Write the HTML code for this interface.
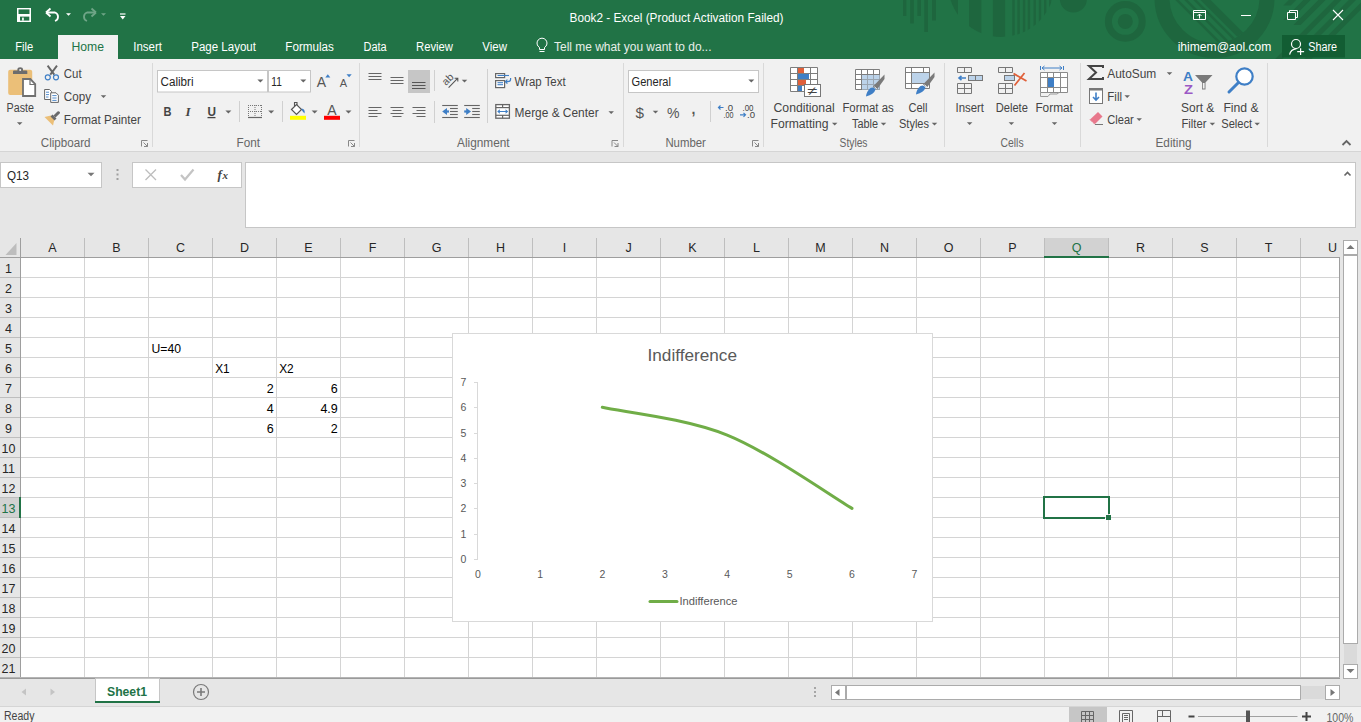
<!DOCTYPE html><html><head><meta charset="utf-8"><style>html,body{margin:0;padding:0;background:#fff;overflow:hidden}svg{display:block}text{font-family:"Liberation Sans",sans-serif}</style></head><body>
<svg width="1361" height="722" viewBox="0 0 1361 722" shape-rendering="auto">
<rect x="0" y="0" width="1361" height="59" fill="#217346" />
<rect x="903" y="0" width="3.4" height="16" fill="#1e663e" />
<rect x="910.2" y="0" width="3.6" height="23.5" fill="#1e663e" />
<rect x="917.4" y="0" width="3.6" height="16" fill="#1e663e" />
<rect x="924.3" y="0" width="3.7" height="32" fill="#1e663e" />
<rect x="932" y="0" width="4" height="20.5" fill="#1e663e" />
<clipPath id="sc"><circle cx="1001.3" cy="-16.2" r="53.2"/></clipPath>
<g clip-path="url(#sc)" fill="#1e663e">
<rect x="940" y="0" width="18" height="40" fill="#1e663e" />
<rect x="969" y="0" width="12.4" height="60" fill="#1e663e" />
<rect x="992.9" y="0" width="12.2" height="60" fill="#1e663e" />
<rect x="1012.3" y="0" width="2.4" height="60" fill="#1e663e" />
<rect x="1017.4" y="0" width="2.4" height="60" fill="#1e663e" />
<rect x="1022.9" y="0" width="2.4" height="60" fill="#1e663e" />
<rect x="1027.7" y="0" width="2.4" height="60" fill="#1e663e" />
<rect x="1033.5" y="0" width="2.4" height="60" fill="#1e663e" />
<rect x="1038.8" y="0" width="2.4" height="60" fill="#1e663e" />
<rect x="1044" y="0" width="2.4" height="60" fill="#1e663e" />
<rect x="1049" y="0" width="2.4" height="60" fill="#1e663e" />
</g>
<circle cx="1073.4" cy="-1" r="13.5" fill="#1e663e"/>
<circle cx="1125.3" cy="21.4" r="16.9" fill="none" stroke="#1e663e" stroke-width="7"/>
<circle cx="1125.3" cy="21.4" r="7.5" fill="#1e663e"/>
<circle cx="1214.5" cy="-2" r="52.5" fill="none" stroke="#1e663e" stroke-width="15"/>
<clipPath id="bc"><circle cx="1214.5" cy="-2" r="45"/></clipPath>
<g clip-path="url(#bc)">
<path d="M1175.25,0 L1178.75,0 L1248.75,70 L1245.25,70 Z" fill="#1e663e" />
<path d="M1184.25,0 L1187.75,0 L1257.75,70 L1254.25,70 Z" fill="#1e663e" />
<path d="M1193.25,0 L1196.75,0 L1266.75,70 L1263.25,70 Z" fill="#1e663e" />
<path d="M1200.5,0 L1210.5,0 L1280.5,70 L1270.5,70 Z" fill="#1e663e" />
</g>
<path d="M1288.9,0 L1296.1,0 L1290.6,5.5 L1283.4,5.5 Z" fill="#1e663e" />
<path d="M1303.4,0 L1310.6,0 L1290.6,20 L1283.4,20 Z" fill="#1e663e" />
<path d="M1318.4,0 L1325.6,0 L1300.6,25 L1293.4,25 Z" fill="#1e663e" />
<path d="M1334.1000000000001,0 L1341.3,0 L1281.3,60 L1274.1000000000001,60 Z" fill="#1e663e" />
<path d="M1348.8000000000002,0 L1356.0,0 L1296.0,60 L1288.8000000000002,60 Z" fill="#1e663e" />
<path d="M1363.4,0 L1370.6,0 L1310.6,60 L1303.4,60 Z" fill="#1e663e" />
<path d="M1193.5,10.5 H1205.5 V19.5 H1193.5 Z M1193.5,12.5 H1205.5" fill="none" stroke="#ffffff" stroke-width="1" />
<path d="M1199.5,18.5 V14 M1197.5,16 L1199.5,14 L1201.5,16" fill="none" stroke="#ffffff" stroke-width="1" />
<line x1="1241" y1="15.5" x2="1251" y2="15.5" stroke="#ffffff" stroke-width="1" />
<path d="M1287.5,12.5 H1295.5 V19.5 H1287.5 Z M1289.5,12.5 V10.5 H1297.5 V17.5 H1295.5" fill="none" stroke="#ffffff" stroke-width="1" />
<path d="M1333,10 L1343,20 M1343,10 L1333,20" fill="none" stroke="#ffffff" stroke-width="1.1" />
<rect x="17" y="8" width="14" height="14" fill="#ffffff" />
<rect x="18.5" y="9.4" width="11" height="4.6" fill="#217346" />
<rect x="20" y="16.6" width="9.3" height="4" fill="#217346" />
<rect x="22.1" y="17.6" width="1.7" height="3" fill="#ffffff" />
<path d="M47,12.5 H55 A4.5,4.5 0 0 1 55,21" fill="none" stroke="#ffffff" stroke-width="1.8" />
<path d="M46,12.5 L50.5,8.5 M46,12.5 L50.5,16.5" fill="none" stroke="#ffffff" stroke-width="1.8" />
<path d="M66.0,13.25 L71.0,13.25 L68.5,15.75 Z" fill="#ffffff" />
<path d="M95,12.5 H87 A4.5,4.5 0 0 0 87,21" fill="none" stroke="#6fa587" stroke-width="1.8" />
<path d="M96,12.5 L91.5,8.5 M96,12.5 L91.5,16.5" fill="none" stroke="#6fa587" stroke-width="1.8" />
<path d="M101.0,13.25 L106.0,13.25 L103.5,15.75 Z" fill="#6fa587" />
<line x1="120" y1="14" x2="125.5" y2="14" stroke="#ffffff" stroke-width="1.2" />
<path d="M120,16 L125.5,16 L122.75,19.5 Z" fill="#ffffff" />
<text x="569.5" y="22" font-size="12.5" fill="#fff" textLength="214" lengthAdjust="spacingAndGlyphs" >Book2 - Excel (Product Activation Failed)</text>
<rect x="58" y="35" width="60" height="24" fill="#f1f1f1" />
<text x="15.3" y="50.5" font-size="12.5" fill="#fff" textLength="18" lengthAdjust="spacingAndGlyphs" >File</text>
<text x="71.5" y="50.5" font-size="12.5" fill="#217346" textLength="32.5" lengthAdjust="spacingAndGlyphs" >Home</text>
<text x="133.2" y="50.5" font-size="12.5" fill="#fff" textLength="28.7" lengthAdjust="spacingAndGlyphs" >Insert</text>
<text x="191.2" y="50.5" font-size="12.5" fill="#fff" textLength="64.8" lengthAdjust="spacingAndGlyphs" >Page Layout</text>
<text x="285.3" y="50.5" font-size="12.5" fill="#fff" textLength="48.5" lengthAdjust="spacingAndGlyphs" >Formulas</text>
<text x="363.5" y="50.5" font-size="12.5" fill="#fff" textLength="23.2" lengthAdjust="spacingAndGlyphs" >Data</text>
<text x="416" y="50.5" font-size="12.5" fill="#fff" textLength="37" lengthAdjust="spacingAndGlyphs" >Review</text>
<text x="482.3" y="50.5" font-size="12.5" fill="#fff" textLength="24.7" lengthAdjust="spacingAndGlyphs" >View</text>
<path d="M539.5,49.5 V47.5 A5,5 0 1 1 544.5,47.5 V49.5 Z" fill="none" stroke="#fff" stroke-width="1" />
<line x1="539.5" y1="51.5" x2="544.5" y2="51.5" stroke="#fff" stroke-width="1" />
<text x="554" y="51.3" font-size="12.5" fill="#e8efe9" textLength="157.5" lengthAdjust="spacingAndGlyphs" >Tell me what you want to do...</text>
<text x="1177.7" y="50.5" font-size="12.5" fill="#fff" textLength="93.6" lengthAdjust="spacingAndGlyphs" >ihimem@aol.com</text>
<rect x="1282" y="35" width="63" height="22.5" fill="#125d33" />
<circle cx="1296" cy="44" r="4.5" fill="none" stroke="#fff" stroke-width="1.2"/>
<path d="M1289.6,54.6 Q1290.5,49.5 1296.5,48.6" fill="none" stroke="#fff" stroke-width="1.2" />
<path d="M1297.2,51.6 H1304.1 M1300.6,48.3 V55" fill="none" stroke="#fff" stroke-width="1.2" />
<text x="1308.2" y="50.5" font-size="12.5" fill="#fff" textLength="28.8" lengthAdjust="spacingAndGlyphs" >Share</text>
<rect x="0" y="59" width="1361" height="92" fill="#f1f1f1" />
<line x1="0" y1="151.5" x2="1361" y2="151.5" stroke="#d5d5d5" stroke-width="1" />
<line x1="152.5" y1="63" x2="152.5" y2="147" stroke="#d9d9d9" stroke-width="1" />
<line x1="359.5" y1="63" x2="359.5" y2="147" stroke="#d9d9d9" stroke-width="1" />
<line x1="623.5" y1="63" x2="623.5" y2="147" stroke="#d9d9d9" stroke-width="1" />
<line x1="763.5" y1="63" x2="763.5" y2="147" stroke="#d9d9d9" stroke-width="1" />
<line x1="944.5" y1="63" x2="944.5" y2="147" stroke="#d9d9d9" stroke-width="1" />
<line x1="1080.5" y1="63" x2="1080.5" y2="147" stroke="#d9d9d9" stroke-width="1" />
<line x1="1267.5" y1="63" x2="1267.5" y2="147" stroke="#d9d9d9" stroke-width="1" />
<text x="40.8" y="146.5" font-size="12.5" fill="#666666" textLength="49.7" lengthAdjust="spacingAndGlyphs" >Clipboard</text>
<text x="236.5" y="146.5" font-size="12.5" fill="#666666" textLength="23.5" lengthAdjust="spacingAndGlyphs" >Font</text>
<text x="457" y="146.5" font-size="12.5" fill="#666666" textLength="52.6" lengthAdjust="spacingAndGlyphs" >Alignment</text>
<text x="665.4" y="146.5" font-size="12.5" fill="#666666" textLength="40.5" lengthAdjust="spacingAndGlyphs" >Number</text>
<text x="839.6" y="146.5" font-size="12.5" fill="#666666" textLength="27.9" lengthAdjust="spacingAndGlyphs" >Styles</text>
<text x="1000.5" y="146.5" font-size="12.5" fill="#666666" textLength="23.1" lengthAdjust="spacingAndGlyphs" >Cells</text>
<text x="1155.5" y="146.5" font-size="12.5" fill="#666666" textLength="36" lengthAdjust="spacingAndGlyphs" >Editing</text>
<path d="M141.5,140.5 H147.5 M141.5,140.5 V146.5" fill="none" stroke="#888" stroke-width="1" />
<path d="M143.5,142.5 L147.5,146.5 M147.5,143 V146.5 H144" fill="none" stroke="#888" stroke-width="1" />
<path d="M348.5,140.5 H354.5 M348.5,140.5 V146.5" fill="none" stroke="#888" stroke-width="1" />
<path d="M350.5,142.5 L354.5,146.5 M354.5,143 V146.5 H351" fill="none" stroke="#888" stroke-width="1" />
<path d="M612.0,140.5 H618.0 M612.0,140.5 V146.5" fill="none" stroke="#888" stroke-width="1" />
<path d="M614.0,142.5 L618.0,146.5 M618.0,143 V146.5 H614.5" fill="none" stroke="#888" stroke-width="1" />
<path d="M752.5,140.5 H758.5 M752.5,140.5 V146.5" fill="none" stroke="#888" stroke-width="1" />
<path d="M754.5,142.5 L758.5,146.5 M758.5,143 V146.5 H755" fill="none" stroke="#888" stroke-width="1" />
<path d="M1342.5,145 L1346.5,141 L1350.5,145" fill="none" stroke="#666" stroke-width="1.8" />
<rect x="8.2" y="69.7" width="24" height="25.3" fill="#ebbf78" rx="2"/>
<path d="M13,74 H27.3 V71.5 Q27.3,70.6 26.3,70.6 H23 V69 Q23,67.2 20.2,67.2 Q17.4,67.2 17.4,69 V70.6 H14 Q13,70.6 13,71.5 Z" fill="#6d6d6d" />
<circle cx="20.2" cy="70" r="1" fill="#f1f1f1"/>
<path d="M23,79 H30.3 L35.2,84 V96 H23 Z" fill="#ffffff" stroke="#707070" stroke-width="1.8" stroke-linejoin="miter"/>
<path d="M30,79 V84.5 H35.5" fill="none" stroke="#707070" stroke-width="1.2" />
<text x="6.6" y="112.3" font-size="12.5" fill="#444444" textLength="27.4" lengthAdjust="spacingAndGlyphs" >Paste</text>
<path d="M16.95,122.125 L22.45,122.125 L19.7,124.875 Z" fill="#666" />
<path d="M47.6,65.6 L54.3,74.6 M57,65.6 L50.3,74.6" fill="none" stroke="#666" stroke-width="1.9" />
<circle cx="47.8" cy="77.3" r="2.5" fill="none" stroke="#3f7fc6" stroke-width="1.2"/>
<circle cx="56" cy="77.3" r="2.5" fill="none" stroke="#3f7fc6" stroke-width="1.2"/>
<text x="63.8" y="77.8" font-size="12.5" fill="#444444" textLength="17.8" lengthAdjust="spacingAndGlyphs" >Cut</text>
<path d="M44.6,89.5 H49.5 L51.5,91.5 V99.5 H44.6 Z" fill="#fff" stroke="#666" stroke-width="1" />
<path d="M50.7,92.8 H56 L58.4,95.2 V102.4 H50.7 Z" fill="#fff" stroke="#666" stroke-width="1" />
<path d="M46,92.2 H49 M46,94.6 H49 M46,97 H48.5" fill="none" stroke="#3f7fc6" stroke-width="0.9" />
<path d="M52.3,95.6 H56.6 M52.3,98 H56.6 M52.3,100.4 H56.6" fill="none" stroke="#3f7fc6" stroke-width="0.9" />
<text x="63.8" y="100.8" font-size="12.5" fill="#444444" textLength="27.2" lengthAdjust="spacingAndGlyphs" >Copy</text>
<path d="M100.75,95.125 L106.25,95.125 L103.5,97.875 Z" fill="#666" />
<path d="M44.5,117 L51,115.5 L54.5,119 L53,125.5 Z" fill="#ebbf78" />
<path d="M50.3,118 L57,111.5 M53.5,121 L60,114.5" fill="none" stroke="#6a6a6a" stroke-width="0" />
<path d="M50.5,116.5 L52.5,114.5 L56.5,118.5 L54.5,120.5 Z" fill="#6a6a6a" />
<path d="M53.5,115.5 L57.5,111.5 Q58.5,110.8 59.2,111.5 L59.7,112 Q60.4,112.7 59.7,113.5 L55.5,117.5 Z" fill="#6a6a6a" />
<text x="63.8" y="123.8" font-size="12.5" fill="#444444" textLength="77" lengthAdjust="spacingAndGlyphs" >Format Painter</text>
<rect x="157.5" y="70.5" width="110" height="21.5" fill="#fff" stroke="#c6c6c6" stroke-width="1"/>
<rect x="268.5" y="70.5" width="42" height="21.5" fill="#fff" stroke="#c6c6c6" stroke-width="1"/>
<text x="160.5" y="85.8" font-size="12.5" fill="#262626" textLength="33" lengthAdjust="spacingAndGlyphs" >Calibri</text>
<text x="271.3" y="85.8" font-size="12.5" fill="#262626" textLength="10.5" lengthAdjust="spacingAndGlyphs" >11</text>
<path d="M257.4,79.5 L263.4,79.5 L260.4,82.5 Z" fill="#666" />
<path d="M300.3,79.5 L306.3,79.5 L303.3,82.5 Z" fill="#666" />
<text x="321.5" y="86.7" font-size="14" fill="#555" text-anchor="middle" >A</text>
<path d="M325.3,77.5 L327.8,74.3 L330.3,77.5 Z" fill="#3f7fc6" />
<text x="343.5" y="86.7" font-size="11" fill="#555" text-anchor="middle" >A</text>
<path d="M346.5,74.3 L351.7,74.3 L349.1,77.3 Z" fill="#3f7fc6" />
<text x="163.5" y="115.8" font-size="13" fill="#444" textLength="8" lengthAdjust="spacingAndGlyphs" font-weight="bold" >B</text>
<text x="185.5" y="115.8" font-size="13" fill="#444" font-weight="bold" font-style="italic" style="font-family:Liberation Serif">I</text>
<text x="207.5" y="115.8" font-size="13" fill="#444" textLength="8.5" lengthAdjust="spacingAndGlyphs" font-weight="bold" >U</text>
<line x1="207.5" y1="117.6" x2="215.5" y2="117.6" stroke="#444" stroke-width="1.3" />
<path d="M225.4,110.5 L231.4,110.5 L228.4,113.5 Z" fill="#666" />
<line x1="239.5" y1="101" x2="239.5" y2="122" stroke="#d0d0d0" stroke-width="1" />
<g fill="#888">
<rect x="248" y="105" width="1" height="1" fill="#777" />
<rect x="248" y="111" width="1" height="1" fill="#777" />
<rect x="250" y="105" width="1" height="1" fill="#777" />
<rect x="250" y="111" width="1" height="1" fill="#777" />
<rect x="252" y="105" width="1" height="1" fill="#777" />
<rect x="252" y="111" width="1" height="1" fill="#777" />
<rect x="254" y="105" width="1" height="1" fill="#777" />
<rect x="254" y="111" width="1" height="1" fill="#777" />
<rect x="256" y="105" width="1" height="1" fill="#777" />
<rect x="256" y="111" width="1" height="1" fill="#777" />
<rect x="258" y="105" width="1" height="1" fill="#777" />
<rect x="258" y="111" width="1" height="1" fill="#777" />
<rect x="260" y="105" width="1" height="1" fill="#777" />
<rect x="260" y="111" width="1" height="1" fill="#777" />
<rect x="248" y="105" width="1" height="1" fill="#777" />
<rect x="254.5" y="105" width="1" height="1" fill="#777" />
<rect x="261" y="105" width="1" height="1" fill="#777" />
<rect x="248" y="107" width="1" height="1" fill="#777" />
<rect x="254.5" y="107" width="1" height="1" fill="#777" />
<rect x="261" y="107" width="1" height="1" fill="#777" />
<rect x="248" y="109" width="1" height="1" fill="#777" />
<rect x="254.5" y="109" width="1" height="1" fill="#777" />
<rect x="261" y="109" width="1" height="1" fill="#777" />
<rect x="248" y="111" width="1" height="1" fill="#777" />
<rect x="254.5" y="111" width="1" height="1" fill="#777" />
<rect x="261" y="111" width="1" height="1" fill="#777" />
<rect x="248" y="113" width="1" height="1" fill="#777" />
<rect x="254.5" y="113" width="1" height="1" fill="#777" />
<rect x="261" y="113" width="1" height="1" fill="#777" />
<rect x="248" y="115" width="1" height="1" fill="#777" />
<rect x="254.5" y="115" width="1" height="1" fill="#777" />
<rect x="261" y="115" width="1" height="1" fill="#777" />
</g>
<line x1="248" y1="117.5" x2="262" y2="117.5" stroke="#666" stroke-width="1.2" />
<path d="M268.2,110.5 L274.2,110.5 L271.2,113.5 Z" fill="#666" />
<line x1="282.5" y1="101" x2="282.5" y2="122" stroke="#d0d0d0" stroke-width="1" />
<path d="M291.5,109.5 L296.5,104.5 L301.5,109.5 L296.5,114.5 Z" fill="#fff" stroke="#555" stroke-width="1.2" />
<path d="M294.5,106 V102.5 H297 V105" fill="none" stroke="#555" stroke-width="1.1" />
<path d="M301.5,108.5 Q305.5,109 304.5,113.5 Q303,112 302,110.5 Z" fill="#3f7fc6" />
<rect x="290" y="115.8" width="16" height="4" fill="#ffff00" />
<path d="M311.6,110.5 L317.6,110.5 L314.6,113.5 Z" fill="#666" />
<text x="332" y="114.8" font-size="14" fill="#555" text-anchor="middle" >A</text>
<rect x="324" y="115.8" width="16" height="4" fill="#ff0000" />
<path d="M345.5,110.5 L351.5,110.5 L348.5,113.5 Z" fill="#666" />
<line x1="368.5" y1="73.5" x2="381.5" y2="73.5" stroke="#666" stroke-width="1" />
<line x1="368.5" y1="76.5" x2="381.5" y2="76.5" stroke="#666" stroke-width="1" />
<line x1="368.5" y1="79.5" x2="381.5" y2="79.5" stroke="#666" stroke-width="1" />
<line x1="390.5" y1="77.5" x2="403.5" y2="77.5" stroke="#666" stroke-width="1" />
<line x1="390.5" y1="80.5" x2="403.5" y2="80.5" stroke="#666" stroke-width="1" />
<line x1="390.5" y1="83.5" x2="403.5" y2="83.5" stroke="#666" stroke-width="1" />
<rect x="408" y="70" width="22" height="23" fill="#c6c6c6" />
<line x1="412" y1="82.5" x2="425.5" y2="82.5" stroke="#555" stroke-width="1" />
<line x1="412" y1="85.5" x2="425.5" y2="85.5" stroke="#555" stroke-width="1" />
<line x1="412" y1="88.5" x2="425.5" y2="88.5" stroke="#555" stroke-width="1" />
<line x1="434.5" y1="70" x2="434.5" y2="91" stroke="#d0d0d0" stroke-width="1" />
<g transform="translate(447.6,79.3) rotate(-45)"><text x="0" y="3.6" font-size="10.5" fill="#555" text-anchor="middle">ab</text></g>
<path d="M448.6,87.6 L457.8,78.2 M454.6,78.2 H457.8 V81.4" fill="none" stroke="#555" stroke-width="1.1" />
<path d="M461.75,79.625 L467.25,79.625 L464.5,82.375 Z" fill="#666" />
<line x1="487.5" y1="69" x2="487.5" y2="123" stroke="#d0d0d0" stroke-width="1" />
<rect x="495.6" y="73.6" width="9" height="4" fill="#fff" stroke="#666" stroke-width="1.2"/>
<line x1="497.5" y1="75.5" x2="509" y2="75.5" stroke="#3f7fc6" stroke-width="1.1" />
<rect x="495.6" y="80.6" width="9" height="7" fill="#fff" stroke="#666" stroke-width="1.2"/>
<line x1="497.5" y1="82.7" x2="503" y2="82.7" stroke="#3f7fc6" stroke-width="1.1" />
<line x1="497.5" y1="84.7" x2="503" y2="84.7" stroke="#3f7fc6" stroke-width="1.1" />
<path d="M510.6,78 V79.3 Q510.6,81.7 507.8,81.7 H505.6 M507.4,79.7 L505.4,81.7 L507.4,83.7" fill="none" stroke="#3f7fc6" stroke-width="1.2" />
<text x="514.6" y="86.3" font-size="12.5" fill="#444444" textLength="51" lengthAdjust="spacingAndGlyphs" >Wrap Text</text>
<rect x="495.8" y="104.6" width="13.6" height="13.6" fill="#fff" stroke="#666" stroke-width="1.3"/>
<line x1="495.8" y1="107.6" x2="509.4" y2="107.6" stroke="#666" stroke-width="1.2" />
<line x1="495.8" y1="115.3" x2="509.4" y2="115.3" stroke="#666" stroke-width="1.2" />
<line x1="502.6" y1="104.6" x2="502.6" y2="107.6" stroke="#666" stroke-width="1.2" />
<line x1="502.6" y1="115.3" x2="502.6" y2="118.2" stroke="#666" stroke-width="1.2" />
<path d="M498.2,111.5 H507.2" fill="none" stroke="#3f7fc6" stroke-width="1" />
<path d="M497.2,111.5 L499.8,109.3 V113.7 Z M508.2,111.5 L505.6,109.3 V113.7 Z" fill="#3f7fc6" />
<text x="514.6" y="116.6" font-size="12.5" fill="#444444" textLength="84" lengthAdjust="spacingAndGlyphs" >Merge &amp; Center</text>
<path d="M608.45,111.125 L613.95,111.125 L611.2,113.875 Z" fill="#666" />
<line x1="368.5" y1="107.5" x2="381.5" y2="107.5" stroke="#666" stroke-width="1" />
<line x1="390.5" y1="107.5" x2="403.5" y2="107.5" stroke="#666" stroke-width="1" />
<line x1="412.5" y1="107.5" x2="425.5" y2="107.5" stroke="#666" stroke-width="1" />
<line x1="368.5" y1="110.5" x2="377.5" y2="110.5" stroke="#666" stroke-width="1" />
<line x1="392.5" y1="110.5" x2="401.5" y2="110.5" stroke="#666" stroke-width="1" />
<line x1="416.5" y1="110.5" x2="425.5" y2="110.5" stroke="#666" stroke-width="1" />
<line x1="368.5" y1="113.5" x2="381.5" y2="113.5" stroke="#666" stroke-width="1" />
<line x1="390.5" y1="113.5" x2="403.5" y2="113.5" stroke="#666" stroke-width="1" />
<line x1="412.5" y1="113.5" x2="425.5" y2="113.5" stroke="#666" stroke-width="1" />
<line x1="368.5" y1="116.5" x2="377.5" y2="116.5" stroke="#666" stroke-width="1" />
<line x1="392.5" y1="116.5" x2="401.5" y2="116.5" stroke="#666" stroke-width="1" />
<line x1="416.5" y1="116.5" x2="425.5" y2="116.5" stroke="#666" stroke-width="1" />
<line x1="434.5" y1="101" x2="434.5" y2="123" stroke="#d0d0d0" stroke-width="1" />
<line x1="442.2" y1="105.5" x2="457.8" y2="105.5" stroke="#666" stroke-width="1.1" />
<line x1="442.2" y1="117.5" x2="457.8" y2="117.5" stroke="#666" stroke-width="1.1" />
<line x1="450" y1="108.5" x2="457.8" y2="108.5" stroke="#666" stroke-width="1.1" />
<line x1="450" y1="111.5" x2="457.8" y2="111.5" stroke="#666" stroke-width="1.1" />
<line x1="450" y1="114.5" x2="457.8" y2="114.5" stroke="#666" stroke-width="1.1" />
<path d="M442.2,111.5 L447,108 V115 Z" fill="#3f7fc6" />
<line x1="446" y1="111.5" x2="449" y2="111.5" stroke="#3f7fc6" stroke-width="2.2" />
<line x1="464.2" y1="105.5" x2="479.8" y2="105.5" stroke="#666" stroke-width="1.1" />
<line x1="464.2" y1="117.5" x2="479.8" y2="117.5" stroke="#666" stroke-width="1.1" />
<line x1="472.2" y1="108.5" x2="479.8" y2="108.5" stroke="#666" stroke-width="1.1" />
<line x1="472.2" y1="111.5" x2="479.8" y2="111.5" stroke="#666" stroke-width="1.1" />
<line x1="472.2" y1="114.5" x2="479.8" y2="114.5" stroke="#666" stroke-width="1.1" />
<path d="M471,111.5 L466.2,108 V115 Z" fill="#3f7fc6" />
<line x1="464.2" y1="111.5" x2="467.2" y2="111.5" stroke="#3f7fc6" stroke-width="2.2" />
<rect x="628.5" y="70.5" width="130" height="22" fill="#fff" stroke="#c6c6c6" stroke-width="1"/>
<text x="631.5" y="85.7" font-size="12.5" fill="#262626" textLength="39.5" lengthAdjust="spacingAndGlyphs" >General</text>
<path d="M748.3,79.5 L754.3,79.5 L751.3,82.5 Z" fill="#666" />
<text x="635.5" y="117.5" font-size="14" fill="#555" textLength="8.5" lengthAdjust="spacingAndGlyphs" >$</text>
<path d="M652.75,110.625 L658.25,110.625 L655.5,113.375 Z" fill="#666" />
<text x="667" y="118" font-size="14" fill="#555" textLength="12.5" lengthAdjust="spacingAndGlyphs" >%</text>
<text x="691.5" y="114" font-size="14" fill="#555" font-weight="bold" >,</text>
<line x1="710.5" y1="101" x2="710.5" y2="122" stroke="#d0d0d0" stroke-width="1" />
<text x="725" y="110.5" font-size="9" fill="#444" textLength="8" lengthAdjust="spacingAndGlyphs" >.0</text>
<text x="723.5" y="118" font-size="9" fill="#444" textLength="10" lengthAdjust="spacingAndGlyphs" >.00</text>
<path d="M723.5,107.5 H718.5 M720.5,105.5 L718.5,107.5 L720.5,109.5" fill="none" stroke="#3f7fc6" stroke-width="1.2" />
<text x="742.5" y="110.5" font-size="9" fill="#444" textLength="11" lengthAdjust="spacingAndGlyphs" >.00</text>
<text x="747" y="118" font-size="9" fill="#444" textLength="8" lengthAdjust="spacingAndGlyphs" >.0</text>
<path d="M740,114.8 H745.5 M743.5,112.8 L745.5,114.8 L743.5,116.8" fill="none" stroke="#3f7fc6" stroke-width="1.2" />
<path d="M790.5,67.5 H817.5 V91.5 H790.5 Z M790.5,73.5 H817.5 M790.5,79.5 H817.5 M790.5,85.5 H817.5 M797.5,67.5 V91.5 M810.5,67.5 V91.5" fill="#fff" stroke="#7d7d7d" stroke-width="1" />
<rect x="798" y="68" width="6" height="5" fill="#e0603a" />
<rect x="798" y="74" width="11" height="5" fill="#3f7fc6" />
<rect x="798" y="80" width="8" height="5" fill="#e0603a" />
<rect x="798" y="86" width="4" height="5" fill="#3f7fc6" />
<rect x="804.5" y="84.5" width="16" height="12" fill="#fff" stroke="#777" stroke-width="1"/>
<text x="807.5" y="95" font-size="12" fill="#444" textLength="10" lengthAdjust="spacingAndGlyphs" >≠</text>
<text x="773.5" y="111.7" font-size="12.5" fill="#444444" textLength="61.2" lengthAdjust="spacingAndGlyphs" >Conditional</text>
<text x="770.5" y="127.7" font-size="12.5" fill="#444444" textLength="58" lengthAdjust="spacingAndGlyphs" >Formatting</text>
<path d="M831.95,122.625 L837.45,122.625 L834.7,125.375 Z" fill="#666" />
<path d="M855.5,69.5 H879.5 V89.5 H855.5 Z M855.5,74.5 H879.5 M855.5,79.5 H879.5 M855.5,84.5 H879.5 M861.5,69.5 V89.5 M867.5,69.5 V89.5 M873.5,69.5 V89.5" fill="#fff" stroke="#7d7d7d" stroke-width="1" />
<rect x="862" y="75" width="17.5" height="14.5" fill="#bcd3ea" />
<path d="M862,79.5 H879.5 M862,84.5 H879.5 M867.5,75 V89.5 M873.5,75 V89.5" fill="none" stroke="#9aa6b2" stroke-width="1" />
<path d="M873,86.5 L884.5,74.5 V79 L877,89.5 Z" fill="#7a7a7a" />
<line x1="874.5" y1="86.5" x2="877" y2="89" stroke="#f1f1f1" stroke-width="0.8" />
<path d="M870.5,88 Q873.5,86.5 875.5,89.5 Q874,94.5 866,96.5 Q866.5,91 870.5,88 Z" fill="#3f7fc6" />
<text x="842.4" y="111.7" font-size="12.5" fill="#444444" textLength="51.3" lengthAdjust="spacingAndGlyphs" >Format as</text>
<text x="852" y="127.7" font-size="12.5" fill="#444444" textLength="26" lengthAdjust="spacingAndGlyphs" >Table</text>
<path d="M880.75,122.625 L886.25,122.625 L883.5,125.375 Z" fill="#666" />
<path d="M905.5,67.5 H929.5 V88.5 H905.5 Z M905.5,72.5 H929.5 M905.5,83.5 H929.5 M911.5,67.5 V88.5 M923.5,67.5 V72.5" fill="#fff" stroke="#7d7d7d" stroke-width="1" />
<rect x="912" y="73" width="17" height="10" fill="#bcd3ea" />
<path d="M923,84.5 L934.5,72.5 V77 L927,87.5 Z" fill="#7a7a7a" />
<line x1="924.5" y1="84.5" x2="927" y2="87" stroke="#f1f1f1" stroke-width="0.8" />
<path d="M920.5,86 Q923.5,84.5 925.5,87.5 Q924,92.5 916,94.5 Q916.5,89 920.5,86 Z" fill="#3f7fc6" />
<text x="908.4" y="111.7" font-size="12.5" fill="#444444" textLength="19.1" lengthAdjust="spacingAndGlyphs" >Cell</text>
<text x="899" y="127.7" font-size="12.5" fill="#444444" textLength="30" lengthAdjust="spacingAndGlyphs" >Styles</text>
<path d="M931.75,122.625 L937.25,122.625 L934.5,125.375 Z" fill="#666" />
<path d="M957.5,67.5 H971.5 V72.5 H957.5 Z M964.5,67.5 V72.5" fill="none" stroke="#777" stroke-width="1" />
<rect x="968.5" y="75.5" width="14" height="5" fill="#bcd3ea" stroke="#777" stroke-width="1"/>
<line x1="975.5" y1="75.5" x2="975.5" y2="80.5" stroke="#777" stroke-width="1" />
<path d="M957.5,83.5 H971.5 V93.5 H957.5 Z M957.5,88.5 H971.5 M964.5,83.5 V93.5" fill="none" stroke="#777" stroke-width="1" />
<path d="M966,78 H959 M961.5,75.8 L959,78 L961.5,80.2" fill="none" stroke="#3f7fc6" stroke-width="1.6" />
<text x="955.5" y="112" font-size="12.5" fill="#444444" textLength="28.5" lengthAdjust="spacingAndGlyphs" >Insert</text>
<path d="M966.85,122.225 L972.35,122.225 L969.6,124.975 Z" fill="#666" />
<path d="M998.5,67.5 H1012.5 V72.5 H998.5 Z M1005.5,67.5 V72.5" fill="none" stroke="#777" stroke-width="1" />
<rect x="1004.5" y="75.5" width="10" height="5" fill="#bcd3ea" stroke="#777" stroke-width="1"/>
<path d="M998.5,83.5 H1012.5 V93.5 H998.5 Z M998.5,88.5 H1012.5 M1005.5,83.5 V93.5" fill="none" stroke="#777" stroke-width="1" />
<path d="M1013.5,73.5 L1026.5,81 M1024.5,73 L1014.5,85.5" fill="none" stroke="#e0603a" stroke-width="1.8" />
<text x="995.7" y="112" font-size="12.5" fill="#444444" textLength="32.2" lengthAdjust="spacingAndGlyphs" >Delete</text>
<path d="M1008.65,122.225 L1014.15,122.225 L1011.4,124.975 Z" fill="#666" />
<path d="M1040.5,72.5 H1067.5 V92.5 H1040.5 Z M1040.5,77.5 H1067.5 M1040.5,87.5 H1067.5 M1047.5,72.5 V92.5 M1053.5,72.5 V77.5 M1053.5,87.5 V92.5 M1060.5,72.5 V92.5" fill="#fff" stroke="#8a8a8a" stroke-width="1" />
<rect x="1048" y="78" width="6" height="9" fill="#3f7fc6" />
<path d="M1040.5,92.5 V96.5 H1048 L1050,94 H1057 L1059,92.5" fill="none" stroke="#999" stroke-width="1" />
<path d="M1040.5,66 V70 M1063.5,66 V70 M1042,68 H1062 M1044.5,66 L1042,68 L1044.5,70 M1059.5,66 L1062,68 L1059.5,70" fill="none" stroke="#3f7fc6" stroke-width="1" />
<text x="1035.4" y="112" font-size="12.5" fill="#444444" textLength="37.5" lengthAdjust="spacingAndGlyphs" >Format</text>
<path d="M1051.75,122.225 L1057.25,122.225 L1054.5,124.975 Z" fill="#666" />
<path d="M1103,68 V66 H1089 L1096,72.5 L1089,79 H1103 V77" fill="none" stroke="#444" stroke-width="2" stroke-linejoin="miter"/>
<text x="1107.3" y="78" font-size="12.5" fill="#444444" textLength="49" lengthAdjust="spacingAndGlyphs" >AutoSum</text>
<path d="M1166.75,72.125 L1172.25,72.125 L1169.5,74.875 Z" fill="#666" />
<rect x="1089.5" y="88.5" width="13" height="15" fill="#fff" stroke="#777" stroke-width="1"/>
<rect x="1089" y="88" width="14" height="2.5" fill="#777" />
<path d="M1096,92.5 V100 M1093,97 L1096,100 L1099,97" fill="none" stroke="#3f7fc6" stroke-width="1.6" />
<text x="1107.3" y="101.3" font-size="12.5" fill="#444444" textLength="14.7" lengthAdjust="spacingAndGlyphs" >Fill</text>
<path d="M1124.45,95.125 L1129.95,95.125 L1127.2,97.875 Z" fill="#666" />
<path d="M1090,119.5 L1098,112 L1102.5,116.5 L1095,124 Z" fill="#e8788c" />
<path d="M1090,119.5 L1093,122.5 L1094.8,124" fill="none" stroke="#e8788c" stroke-width="1" />
<line x1="1095" y1="124.5" x2="1103" y2="124.5" stroke="#777" stroke-width="1" />
<text x="1107.3" y="123.9" font-size="12.5" fill="#444444" textLength="26.5" lengthAdjust="spacingAndGlyphs" >Clear</text>
<path d="M1136.45,118.125 L1141.95,118.125 L1139.2,120.875 Z" fill="#666" />
<text x="1183" y="80.5" font-size="12" fill="#3f7fc6" textLength="10" lengthAdjust="spacingAndGlyphs" font-weight="bold" >A</text>
<text x="1184" y="93.5" font-size="12" fill="#9b59c5" textLength="9" lengthAdjust="spacingAndGlyphs" font-weight="bold" >Z</text>
<path d="M1195,75 H1212.5 L1205.5,82.5 V89.5 H1202 V82.5 Z" fill="#7a7a7a" />
<rect x="1202.8" y="83" width="1.8" height="5.5" fill="#f1f1f1" />
<text x="1181" y="112.4" font-size="12.5" fill="#444444" textLength="33.3" lengthAdjust="spacingAndGlyphs" >Sort &amp;</text>
<text x="1181.5" y="127.6" font-size="12.5" fill="#444444" textLength="25" lengthAdjust="spacingAndGlyphs" >Filter</text>
<path d="M1209.65,122.625 L1215.15,122.625 L1212.4,125.375 Z" fill="#666" />
<circle cx="1244.5" cy="76.5" r="8.2" fill="#fff" stroke="#3f7fc6" stroke-width="2.2"/>
<line x1="1238.5" y1="82.5" x2="1229" y2="92" stroke="#3f7fc6" stroke-width="3" stroke-linecap="round"/>
<text x="1223.4" y="112.4" font-size="12.5" fill="#444444" textLength="35.3" lengthAdjust="spacingAndGlyphs" >Find &amp;</text>
<text x="1221.2" y="127.6" font-size="12.5" fill="#444444" textLength="31" lengthAdjust="spacingAndGlyphs" >Select</text>
<path d="M1254.45,122.625 L1259.95,122.625 L1257.2,125.375 Z" fill="#666" />
<rect x="0" y="152" width="1361" height="555" fill="#e6e6e6" />
<rect x="0.5" y="162.5" width="101" height="25" fill="#fff" stroke="#c6c6c6" stroke-width="1"/>
<text x="7" y="180" font-size="12.5" fill="#262626" textLength="22" lengthAdjust="spacingAndGlyphs" >Q13</text>
<path d="M87.5,172.75 L94.5,172.75 L91,176.25 Z" fill="#777" />
<rect x="116.5" y="169" width="2" height="2" fill="#a0a0a0" />
<rect x="116.5" y="173.5" width="2" height="2" fill="#a0a0a0" />
<rect x="116.5" y="178" width="2" height="2" fill="#a0a0a0" />
<rect x="132.5" y="162.5" width="109" height="25" fill="#fff" stroke="#c6c6c6" stroke-width="1"/>
<path d="M145.5,169.5 L156,180 M156,169.5 L145.5,180" fill="none" stroke="#bdbdbd" stroke-width="1.3" />
<path d="M181,175 L185,179.5 L193.5,169.5" fill="none" stroke="#c4c4c4" stroke-width="2.2" />
<text x="217.5" y="178.5" font-size="13" fill="#444" font-weight="bold" font-style="italic" style="font-family:Liberation Serif">f</text>
<text x="222.5" y="178.5" font-size="11" fill="#444" font-weight="bold" font-style="italic" style="font-family:Liberation Serif">x</text>
<rect x="245.5" y="162.5" width="1110" height="65" fill="#fff" stroke="#c6c6c6" stroke-width="1"/>
<path d="M1344.5,175.5 L1347.5,172.5 L1350.5,175.5" fill="none" stroke="#666" stroke-width="1.6" />
<rect x="0" y="238" width="1340" height="20" fill="#e6e6e6" />
<path d="M5.5,255 L16.5,255 L16.5,243 Z" fill="#bdbdbd" />
<text x="52.5" y="252" font-size="12.5" fill="#262626" text-anchor="middle" >A</text>
<line x1="84.5" y1="238" x2="84.5" y2="257" stroke="#bebebe" stroke-width="1" />
<text x="116.5" y="252" font-size="12.5" fill="#262626" text-anchor="middle" >B</text>
<line x1="148.5" y1="238" x2="148.5" y2="257" stroke="#bebebe" stroke-width="1" />
<text x="180.5" y="252" font-size="12.5" fill="#262626" text-anchor="middle" >C</text>
<line x1="212.5" y1="238" x2="212.5" y2="257" stroke="#bebebe" stroke-width="1" />
<text x="244.5" y="252" font-size="12.5" fill="#262626" text-anchor="middle" >D</text>
<line x1="276.5" y1="238" x2="276.5" y2="257" stroke="#bebebe" stroke-width="1" />
<text x="308.5" y="252" font-size="12.5" fill="#262626" text-anchor="middle" >E</text>
<line x1="340.5" y1="238" x2="340.5" y2="257" stroke="#bebebe" stroke-width="1" />
<text x="372.5" y="252" font-size="12.5" fill="#262626" text-anchor="middle" >F</text>
<line x1="404.5" y1="238" x2="404.5" y2="257" stroke="#bebebe" stroke-width="1" />
<text x="436.5" y="252" font-size="12.5" fill="#262626" text-anchor="middle" >G</text>
<line x1="468.5" y1="238" x2="468.5" y2="257" stroke="#bebebe" stroke-width="1" />
<text x="500.5" y="252" font-size="12.5" fill="#262626" text-anchor="middle" >H</text>
<line x1="532.5" y1="238" x2="532.5" y2="257" stroke="#bebebe" stroke-width="1" />
<text x="564.5" y="252" font-size="12.5" fill="#262626" text-anchor="middle" >I</text>
<line x1="596.5" y1="238" x2="596.5" y2="257" stroke="#bebebe" stroke-width="1" />
<text x="628.5" y="252" font-size="12.5" fill="#262626" text-anchor="middle" >J</text>
<line x1="660.5" y1="238" x2="660.5" y2="257" stroke="#bebebe" stroke-width="1" />
<text x="692.5" y="252" font-size="12.5" fill="#262626" text-anchor="middle" >K</text>
<line x1="724.5" y1="238" x2="724.5" y2="257" stroke="#bebebe" stroke-width="1" />
<text x="756.5" y="252" font-size="12.5" fill="#262626" text-anchor="middle" >L</text>
<line x1="788.5" y1="238" x2="788.5" y2="257" stroke="#bebebe" stroke-width="1" />
<text x="820.5" y="252" font-size="12.5" fill="#262626" text-anchor="middle" >M</text>
<line x1="852.5" y1="238" x2="852.5" y2="257" stroke="#bebebe" stroke-width="1" />
<text x="884.5" y="252" font-size="12.5" fill="#262626" text-anchor="middle" >N</text>
<line x1="916.5" y1="238" x2="916.5" y2="257" stroke="#bebebe" stroke-width="1" />
<text x="948.5" y="252" font-size="12.5" fill="#262626" text-anchor="middle" >O</text>
<line x1="980.5" y1="238" x2="980.5" y2="257" stroke="#bebebe" stroke-width="1" />
<text x="1012.5" y="252" font-size="12.5" fill="#262626" text-anchor="middle" >P</text>
<line x1="1044.5" y1="238" x2="1044.5" y2="257" stroke="#bebebe" stroke-width="1" />
<rect x="1045" y="238" width="63" height="19" fill="#d2d2d2" />
<text x="1076.5" y="252" font-size="12.5" fill="#217346" text-anchor="middle" >Q</text>
<line x1="1108.5" y1="238" x2="1108.5" y2="257" stroke="#bebebe" stroke-width="1" />
<text x="1140.5" y="252" font-size="12.5" fill="#262626" text-anchor="middle" >R</text>
<line x1="1172.5" y1="238" x2="1172.5" y2="257" stroke="#bebebe" stroke-width="1" />
<text x="1204.5" y="252" font-size="12.5" fill="#262626" text-anchor="middle" >S</text>
<line x1="1236.5" y1="238" x2="1236.5" y2="257" stroke="#bebebe" stroke-width="1" />
<text x="1268.5" y="252" font-size="12.5" fill="#262626" text-anchor="middle" >T</text>
<line x1="1300.5" y1="238" x2="1300.5" y2="257" stroke="#bebebe" stroke-width="1" />
<text x="1332.5" y="252" font-size="12.5" fill="#262626" text-anchor="middle" >U</text>
<line x1="20.5" y1="238" x2="20.5" y2="678" stroke="#9e9e9e" stroke-width="1" />
<rect x="21" y="258" width="1319" height="420" fill="#ffffff" />
<rect x="0" y="258" width="20" height="420" fill="#e6e6e6" />
<text x="8.5" y="272.5" font-size="12.5" fill="#262626" text-anchor="middle" >1</text>
<line x1="0" y1="277.5" x2="20" y2="277.5" stroke="#bebebe" stroke-width="1" />
<text x="8.5" y="292.5" font-size="12.5" fill="#262626" text-anchor="middle" >2</text>
<line x1="0" y1="297.5" x2="20" y2="297.5" stroke="#bebebe" stroke-width="1" />
<text x="8.5" y="312.5" font-size="12.5" fill="#262626" text-anchor="middle" >3</text>
<line x1="0" y1="317.5" x2="20" y2="317.5" stroke="#bebebe" stroke-width="1" />
<text x="8.5" y="332.5" font-size="12.5" fill="#262626" text-anchor="middle" >4</text>
<line x1="0" y1="337.5" x2="20" y2="337.5" stroke="#bebebe" stroke-width="1" />
<text x="8.5" y="352.5" font-size="12.5" fill="#262626" text-anchor="middle" >5</text>
<line x1="0" y1="357.5" x2="20" y2="357.5" stroke="#bebebe" stroke-width="1" />
<text x="8.5" y="372.5" font-size="12.5" fill="#262626" text-anchor="middle" >6</text>
<line x1="0" y1="377.5" x2="20" y2="377.5" stroke="#bebebe" stroke-width="1" />
<text x="8.5" y="392.5" font-size="12.5" fill="#262626" text-anchor="middle" >7</text>
<line x1="0" y1="397.5" x2="20" y2="397.5" stroke="#bebebe" stroke-width="1" />
<text x="8.5" y="412.5" font-size="12.5" fill="#262626" text-anchor="middle" >8</text>
<line x1="0" y1="417.5" x2="20" y2="417.5" stroke="#bebebe" stroke-width="1" />
<text x="8.5" y="432.5" font-size="12.5" fill="#262626" text-anchor="middle" >9</text>
<line x1="0" y1="437.5" x2="20" y2="437.5" stroke="#bebebe" stroke-width="1" />
<text x="8.5" y="452.5" font-size="12.5" fill="#262626" text-anchor="middle" >10</text>
<line x1="0" y1="457.5" x2="20" y2="457.5" stroke="#bebebe" stroke-width="1" />
<text x="8.5" y="472.5" font-size="12.5" fill="#262626" text-anchor="middle" >11</text>
<line x1="0" y1="477.5" x2="20" y2="477.5" stroke="#bebebe" stroke-width="1" />
<text x="8.5" y="492.5" font-size="12.5" fill="#262626" text-anchor="middle" >12</text>
<line x1="0" y1="497.5" x2="20" y2="497.5" stroke="#bebebe" stroke-width="1" />
<rect x="0" y="498" width="20" height="19" fill="#d2d2d2" />
<text x="8.5" y="512.5" font-size="12.5" fill="#217346" text-anchor="middle" >13</text>
<line x1="0" y1="517.5" x2="20" y2="517.5" stroke="#bebebe" stroke-width="1" />
<text x="8.5" y="532.5" font-size="12.5" fill="#262626" text-anchor="middle" >14</text>
<line x1="0" y1="537.5" x2="20" y2="537.5" stroke="#bebebe" stroke-width="1" />
<text x="8.5" y="552.5" font-size="12.5" fill="#262626" text-anchor="middle" >15</text>
<line x1="0" y1="557.5" x2="20" y2="557.5" stroke="#bebebe" stroke-width="1" />
<text x="8.5" y="572.5" font-size="12.5" fill="#262626" text-anchor="middle" >16</text>
<line x1="0" y1="577.5" x2="20" y2="577.5" stroke="#bebebe" stroke-width="1" />
<text x="8.5" y="592.5" font-size="12.5" fill="#262626" text-anchor="middle" >17</text>
<line x1="0" y1="597.5" x2="20" y2="597.5" stroke="#bebebe" stroke-width="1" />
<text x="8.5" y="612.5" font-size="12.5" fill="#262626" text-anchor="middle" >18</text>
<line x1="0" y1="617.5" x2="20" y2="617.5" stroke="#bebebe" stroke-width="1" />
<text x="8.5" y="632.5" font-size="12.5" fill="#262626" text-anchor="middle" >19</text>
<line x1="0" y1="637.5" x2="20" y2="637.5" stroke="#bebebe" stroke-width="1" />
<text x="8.5" y="652.5" font-size="12.5" fill="#262626" text-anchor="middle" >20</text>
<line x1="0" y1="657.5" x2="20" y2="657.5" stroke="#bebebe" stroke-width="1" />
<text x="8.5" y="672.5" font-size="12.5" fill="#262626" text-anchor="middle" >21</text>
<line x1="0" y1="677.5" x2="20" y2="677.5" stroke="#bebebe" stroke-width="1" />
<line x1="21" y1="277.5" x2="1339" y2="277.5" stroke="#d4d4d4" stroke-width="1" />
<line x1="21" y1="297.5" x2="1339" y2="297.5" stroke="#d4d4d4" stroke-width="1" />
<line x1="21" y1="317.5" x2="1339" y2="317.5" stroke="#d4d4d4" stroke-width="1" />
<line x1="21" y1="337.5" x2="1339" y2="337.5" stroke="#d4d4d4" stroke-width="1" />
<line x1="21" y1="357.5" x2="1339" y2="357.5" stroke="#d4d4d4" stroke-width="1" />
<line x1="21" y1="377.5" x2="1339" y2="377.5" stroke="#d4d4d4" stroke-width="1" />
<line x1="21" y1="397.5" x2="1339" y2="397.5" stroke="#d4d4d4" stroke-width="1" />
<line x1="21" y1="417.5" x2="1339" y2="417.5" stroke="#d4d4d4" stroke-width="1" />
<line x1="21" y1="437.5" x2="1339" y2="437.5" stroke="#d4d4d4" stroke-width="1" />
<line x1="21" y1="457.5" x2="1339" y2="457.5" stroke="#d4d4d4" stroke-width="1" />
<line x1="21" y1="477.5" x2="1339" y2="477.5" stroke="#d4d4d4" stroke-width="1" />
<line x1="21" y1="497.5" x2="1339" y2="497.5" stroke="#d4d4d4" stroke-width="1" />
<line x1="21" y1="517.5" x2="1339" y2="517.5" stroke="#d4d4d4" stroke-width="1" />
<line x1="21" y1="537.5" x2="1339" y2="537.5" stroke="#d4d4d4" stroke-width="1" />
<line x1="21" y1="557.5" x2="1339" y2="557.5" stroke="#d4d4d4" stroke-width="1" />
<line x1="21" y1="577.5" x2="1339" y2="577.5" stroke="#d4d4d4" stroke-width="1" />
<line x1="21" y1="597.5" x2="1339" y2="597.5" stroke="#d4d4d4" stroke-width="1" />
<line x1="21" y1="617.5" x2="1339" y2="617.5" stroke="#d4d4d4" stroke-width="1" />
<line x1="21" y1="637.5" x2="1339" y2="637.5" stroke="#d4d4d4" stroke-width="1" />
<line x1="21" y1="657.5" x2="1339" y2="657.5" stroke="#d4d4d4" stroke-width="1" />
<line x1="84.5" y1="258" x2="84.5" y2="677" stroke="#d4d4d4" stroke-width="1" />
<line x1="148.5" y1="258" x2="148.5" y2="677" stroke="#d4d4d4" stroke-width="1" />
<line x1="212.5" y1="258" x2="212.5" y2="677" stroke="#d4d4d4" stroke-width="1" />
<line x1="276.5" y1="258" x2="276.5" y2="677" stroke="#d4d4d4" stroke-width="1" />
<line x1="340.5" y1="258" x2="340.5" y2="677" stroke="#d4d4d4" stroke-width="1" />
<line x1="404.5" y1="258" x2="404.5" y2="677" stroke="#d4d4d4" stroke-width="1" />
<line x1="468.5" y1="258" x2="468.5" y2="677" stroke="#d4d4d4" stroke-width="1" />
<line x1="532.5" y1="258" x2="532.5" y2="677" stroke="#d4d4d4" stroke-width="1" />
<line x1="596.5" y1="258" x2="596.5" y2="677" stroke="#d4d4d4" stroke-width="1" />
<line x1="660.5" y1="258" x2="660.5" y2="677" stroke="#d4d4d4" stroke-width="1" />
<line x1="724.5" y1="258" x2="724.5" y2="677" stroke="#d4d4d4" stroke-width="1" />
<line x1="788.5" y1="258" x2="788.5" y2="677" stroke="#d4d4d4" stroke-width="1" />
<line x1="852.5" y1="258" x2="852.5" y2="677" stroke="#d4d4d4" stroke-width="1" />
<line x1="916.5" y1="258" x2="916.5" y2="677" stroke="#d4d4d4" stroke-width="1" />
<line x1="980.5" y1="258" x2="980.5" y2="677" stroke="#d4d4d4" stroke-width="1" />
<line x1="1044.5" y1="258" x2="1044.5" y2="677" stroke="#d4d4d4" stroke-width="1" />
<line x1="1108.5" y1="258" x2="1108.5" y2="677" stroke="#d4d4d4" stroke-width="1" />
<line x1="1172.5" y1="258" x2="1172.5" y2="677" stroke="#d4d4d4" stroke-width="1" />
<line x1="1236.5" y1="258" x2="1236.5" y2="677" stroke="#d4d4d4" stroke-width="1" />
<line x1="1300.5" y1="258" x2="1300.5" y2="677" stroke="#d4d4d4" stroke-width="1" />
<line x1="0" y1="257.5" x2="1340" y2="257.5" stroke="#9e9e9e" stroke-width="1" />
<line x1="1339.5" y1="257" x2="1339.5" y2="678" stroke="#9e9e9e" stroke-width="1" />
<rect x="1044" y="256" width="65" height="2" fill="#217346" />
<rect x="19" y="497" width="2" height="21" fill="#217346" />
<text x="151.5" y="352.7" font-size="12.5" fill="#000000" textLength="29.5" lengthAdjust="spacingAndGlyphs" >U=40</text>
<text x="215.2" y="372.7" font-size="12.5" fill="#000000" textLength="14.5" lengthAdjust="spacingAndGlyphs" >X1</text>
<text x="279.2" y="372.7" font-size="12.5" fill="#000000" textLength="14.5" lengthAdjust="spacingAndGlyphs" >X2</text>
<text x="273.8" y="392.7" font-size="12.5" fill="#000000" text-anchor="end" >2</text>
<text x="337.8" y="392.7" font-size="12.5" fill="#000000" text-anchor="end" >6</text>
<text x="273.8" y="412.7" font-size="12.5" fill="#000000" text-anchor="end" >4</text>
<text x="337.8" y="412.7" font-size="12.5" fill="#000000" text-anchor="end" >4.9</text>
<text x="273.8" y="432.7" font-size="12.5" fill="#000000" text-anchor="end" >6</text>
<text x="337.8" y="432.7" font-size="12.5" fill="#000000" text-anchor="end" >2</text>
<rect x="1043" y="496" width="67" height="2" fill="#217346" />
<rect x="1043" y="496" width="2" height="23" fill="#217346" />
<rect x="1108" y="496" width="2" height="18" fill="#217346" />
<rect x="1043" y="517" width="62" height="2" fill="#217346" />
<rect x="1106" y="515" width="5" height="5" fill="#217346" />
<rect x="452.5" y="333.5" width="480" height="288" fill="#ffffff" stroke="#d9d9d9" stroke-width="1"/>
<text x="647.5" y="360.8" font-size="17" fill="#595959" textLength="89.5" lengthAdjust="spacingAndGlyphs" >Indifference</text>
<line x1="477.5" y1="382" x2="477.5" y2="559.5" stroke="#d9d9d9" stroke-width="1" />
<line x1="474" y1="559.5" x2="478" y2="559.5" stroke="#d9d9d9" stroke-width="1" />
<text x="463.5" y="563.0" font-size="10.5" fill="#595959" text-anchor="middle" >0</text>
<line x1="474" y1="534.5" x2="478" y2="534.5" stroke="#d9d9d9" stroke-width="1" />
<text x="463.5" y="537.71" font-size="10.5" fill="#595959" text-anchor="middle" >1</text>
<line x1="474" y1="508.5" x2="478" y2="508.5" stroke="#d9d9d9" stroke-width="1" />
<text x="463.5" y="512.4200000000001" font-size="10.5" fill="#595959" text-anchor="middle" >2</text>
<line x1="474" y1="483.5" x2="478" y2="483.5" stroke="#d9d9d9" stroke-width="1" />
<text x="463.5" y="487.13" font-size="10.5" fill="#595959" text-anchor="middle" >3</text>
<line x1="474" y1="458.5" x2="478" y2="458.5" stroke="#d9d9d9" stroke-width="1" />
<text x="463.5" y="461.84000000000003" font-size="10.5" fill="#595959" text-anchor="middle" >4</text>
<line x1="474" y1="433.5" x2="478" y2="433.5" stroke="#d9d9d9" stroke-width="1" />
<text x="463.5" y="436.55" font-size="10.5" fill="#595959" text-anchor="middle" >5</text>
<line x1="474" y1="407.5" x2="478" y2="407.5" stroke="#d9d9d9" stroke-width="1" />
<text x="463.5" y="411.26" font-size="10.5" fill="#595959" text-anchor="middle" >6</text>
<line x1="474" y1="382.5" x2="478" y2="382.5" stroke="#d9d9d9" stroke-width="1" />
<text x="463.5" y="385.97" font-size="10.5" fill="#595959" text-anchor="middle" >7</text>
<text x="477.8" y="578" font-size="10.5" fill="#595959" text-anchor="middle" >0</text>
<text x="540.17" y="578" font-size="10.5" fill="#595959" text-anchor="middle" >1</text>
<text x="602.54" y="578" font-size="10.5" fill="#595959" text-anchor="middle" >2</text>
<text x="664.91" y="578" font-size="10.5" fill="#595959" text-anchor="middle" >3</text>
<text x="727.28" y="578" font-size="10.5" fill="#595959" text-anchor="middle" >4</text>
<text x="789.65" y="578" font-size="10.5" fill="#595959" text-anchor="middle" >5</text>
<text x="852.02" y="578" font-size="10.5" fill="#595959" text-anchor="middle" >6</text>
<text x="914.39" y="578" font-size="10.5" fill="#595959" text-anchor="middle" >7</text>
<path d="M602.3,407.3 C623.1,411.9 685.6,418.25 727.2,435.1 C768.8,451.95 831.2,496.2 852,508.4" fill="none" stroke="#70ad47" stroke-width="3" stroke-linecap="round"/>
<line x1="650" y1="601.5" x2="677" y2="601.5" stroke="#70ad47" stroke-width="3" stroke-linecap="round"/>
<text x="679.5" y="604.8" font-size="10.8" fill="#595959" textLength="58" lengthAdjust="spacingAndGlyphs" >Indifference</text>
<rect x="0" y="678" width="1361" height="29" fill="#e6e6e6" />
<rect x="0" y="677" width="1340" height="1" fill="#b4b4b4" />
<rect x="0" y="678" width="1340" height="1" fill="#9a9a9a" />
<path d="M21.5,692 L26,688.5 V695.5 Z" fill="#c4c4c4" />
<path d="M55,692 L50.5,688.5 V695.5 Z" fill="#c4c4c4" />
<rect x="95.5" y="678.5" width="64" height="24" fill="#ffffff" stroke="#c6c6c6" stroke-width="1"/>
<rect x="95" y="701" width="65" height="2" fill="#217346" />
<text x="107" y="695.6" font-size="12" fill="#217346" textLength="40" lengthAdjust="spacingAndGlyphs" font-weight="bold" >Sheet1</text>
<circle cx="201" cy="692" r="7.5" fill="none" stroke="#7a7a7a" stroke-width="1.2"/>
<path d="M197,692 H205 M201,688 V696" fill="none" stroke="#7a7a7a" stroke-width="1.6" />
<rect x="814" y="687" width="2" height="2" fill="#a6a6a6" />
<rect x="814" y="691" width="2" height="2" fill="#a6a6a6" />
<rect x="814" y="695" width="2" height="2" fill="#a6a6a6" />
<rect x="831.5" y="685.5" width="1" height="1" fill="none" />
<rect x="831.5" y="685.5" width="14" height="14" fill="#ffffff" stroke="#ababab" stroke-width="1"/>
<path d="M835,692.5 L839.5,689 V696 Z" fill="#777" />
<rect x="846.5" y="685.5" width="454" height="14" fill="#ffffff" stroke="#ababab" stroke-width="1"/>
<rect x="1301" y="686" width="24" height="13" fill="#dadada" />
<rect x="1325.5" y="685.5" width="14" height="14" fill="#ffffff" stroke="#ababab" stroke-width="1"/>
<path d="M1335,692.5 L1330.5,689 V696 Z" fill="#777" />
<rect x="1343.5" y="240.5" width="14" height="14" fill="#ffffff" stroke="#ababab" stroke-width="1"/>
<path d="M1346.5,249 L1354.5,249 L1350.5,245 Z" fill="#777" />
<rect x="1343.5" y="255.5" width="14" height="388" fill="#ffffff" stroke="#ababab" stroke-width="1"/>
<rect x="1344" y="644" width="13" height="20" fill="#dadada" />
<rect x="1343.5" y="664.5" width="14" height="14" fill="#ffffff" stroke="#ababab" stroke-width="1"/>
<path d="M1346.5,669 L1354.5,669 L1350.5,673 Z" fill="#777" />
<rect x="0" y="707" width="1361" height="15" fill="#f1f1f1" />
<line x1="0" y1="706.5" x2="1361" y2="706.5" stroke="#d5d5d5" stroke-width="1" />
<text x="4" y="720" font-size="12.5" fill="#444" textLength="30.5" lengthAdjust="spacingAndGlyphs" >Ready</text>
<rect x="1069" y="707" width="38" height="15" fill="#c6c6c6" />
<path d="M1081.5,711.5 H1093.5 V722 M1081.5,711.5 V722 M1081.5,715.5 H1093.5 M1081.5,719.5 H1093.5 M1085.5,711.5 V722 M1089.5,711.5 V722" fill="none" stroke="#666" stroke-width="1" />
<path d="M1119.5,710.5 H1132.5 V722 M1119.5,710.5 V722 M1122.5,713.5 H1129.5 V722 M1122.5,713.5 V722 M1124,715.5 H1128 M1124,717.5 H1128 M1124,719.5 H1128" fill="none" stroke="#666" stroke-width="1" />
<path d="M1157.5,722 V710.5 H1170.5 V722 M1162.5,710.5 V716.5 M1157.5,716.5 H1170.5" fill="none" stroke="#666" stroke-width="1" />
<line x1="1188.5" y1="716.5" x2="1194.5" y2="716.5" stroke="#444" stroke-width="2" />
<line x1="1198" y1="716.5" x2="1297.5" y2="716.5" stroke="#a0a0a0" stroke-width="1" />
<rect x="1246" y="710.5" width="4" height="11.5" fill="#555" />
<path d="M1302,716.5 H1311 M1306.5,712 V721" fill="none" stroke="#444" stroke-width="2" />
<text x="1326.4" y="721.5" font-size="12" fill="#666" textLength="27" lengthAdjust="spacingAndGlyphs" >100%</text>
</svg></body></html>
